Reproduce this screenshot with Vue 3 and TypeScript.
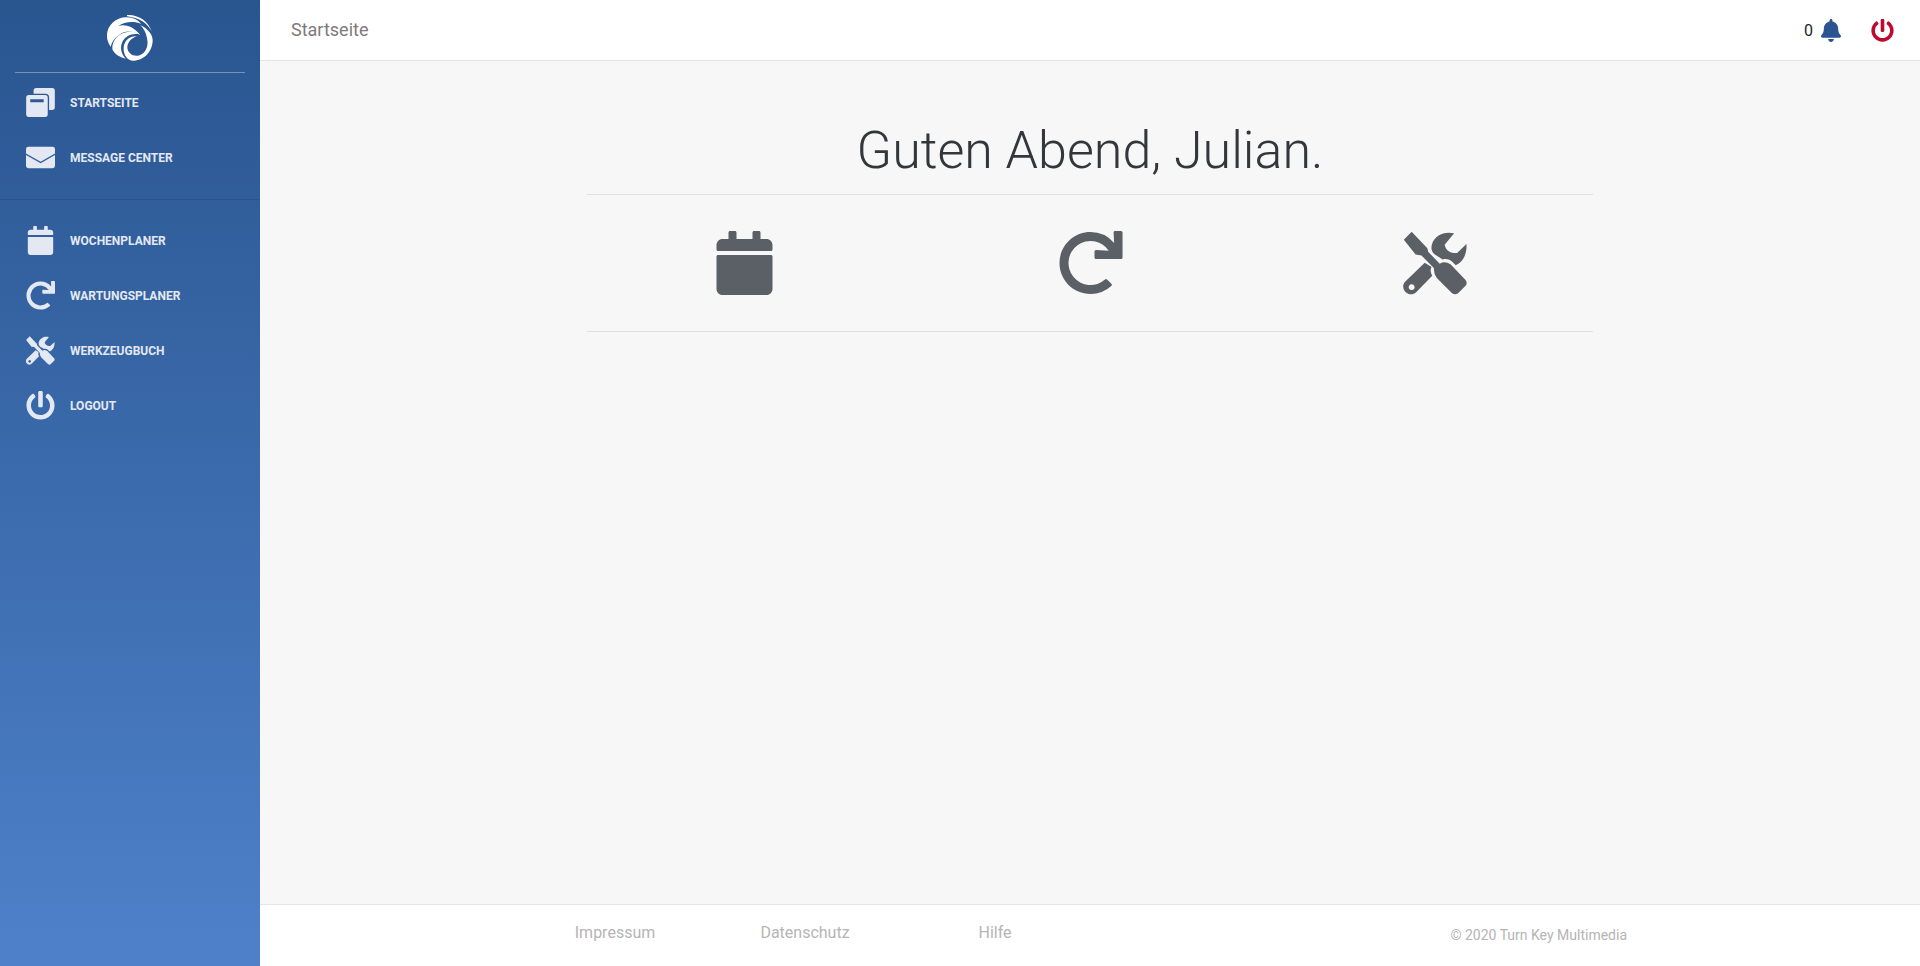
<script setup lang="ts">
interface IconDef {
  box: string
  d: string
}

const icons: Record<string, IconDef> = {
  copy: {
    box: '0 0 85 86',
    d: 'M30 0h47a8 8 0 0 1 8 8v49a8 8 0 0 1-8 8h-9V28a11 11 0 0 0-11-11H22V8a8 8 0 0 1 8-8zM8 21h48a8 8 0 0 1 8 8v49a8 8 0 0 1-8 8H8a8 8 0 0 1-8-8V29a8 8 0 0 1 8-8zM12 33v9h40v-9z',
  },
  mail: {
    box: '0 0 85 63',
    d: 'M7 0h71a7 7 0 0 1 7 7v13L43 44 0 20V7a7 7 0 0 1 7-7zM0 24l43 24 42-24v32a7 7 0 0 1-7 7H7a7 7 0 0 1-7-7z',
  },
  calendar: {
    box: '0 0 448 512',
    d: 'M12 192h424c6.6 0 12 5.4 12 12v260c0 26.5-21.5 48-48 48H48c-26.5 0-48-21.5-48-48V204c0-6.6 5.4-12 12-12zm436-44v-36c0-26.5-21.5-48-48-48h-48V12c0-6.6-5.4-12-12-12h-40c-6.6 0-12 5.4-12 12v52H160V12c0-6.6-5.4-12-12-12h-40c-6.6 0-12 5.4-12 12v52H48C21.5 64 0 85.5 0 112v36c0 6.6 5.4 12 12 12h424c6.6 0 12-5.4 12-12z',
  },
  redo: {
    box: '0 0 512 512',
    d: 'M500.33 0h-47.41a12 12 0 0 0-12 12.57l4 82.76A247.42 247.42 0 0 0 256 8C119.34 8 7.9 119.53 8 256.19 8.1 393.07 119.1 504 256 504a247.1 247.1 0 0 0 166.18-63.91 12 12 0 0 0 .48-17.43l-34-34a12 12 0 0 0-16.38-.55A176 176 0 1 1 402.1 157.8l-101.53-4.87a12 12 0 0 0-12.57 12v47.41a12 12 0 0 0 12 12h200.33a12 12 0 0 0 12-12V12a12 12 0 0 0-12-12z',
  },
  tools: {
    box: '130 60 196 196',
    d: 'M155 62L131 87L167 132L185 135L223 173Q222 190 232 204L278 250Q288 258 298 250L320 228Q327 219 320 210L274 162Q256 150 241 160L206 124L203 113zM285 67C255 60 225 73 217 101C213 116 218 126 226 132L250 147C268 142 278 152 290 165C305 158 325 140 323 100L294 127C278 130 260 122 256 102zM195 157L134 216C126 226 128 240 138 248C148 256 160 255 168 248L218 197C212 186 212 176 216 170zM155 223a9 9 0 1 0 .01 0z',
  },
  power: {
    box: '0 0 512 512',
    d: 'M400 54.1c63 45 104 118.6 104 201.9 0 136.8-110.8 247.7-247.5 248C120 504.3 8.2 393 8 256.4 7.9 173.1 48.9 99.3 111.8 54.2c11.7-8.3 28-4.8 35 7.7L162.6 90c5.9 10.5 3.1 23.8-6.6 31-41.5 30.8-68 79.6-68 134.9-.1 92.3 74.5 168.1 168 168.1 91.6 0 168.6-74.2 168-169.1-.3-51.8-24.7-101.8-68.1-134-9.7-7.2-12.4-20.5-6.5-30.9l15.8-28.1c7-12.4 23.2-16.1 34.8-7.8zM296 264V24c0-13.3-10.7-24-24-24h-32c-13.3 0-24 10.7-24 24v240c0 13.3 10.7 24 24 24h32c13.3 0 24-10.7 24-24z',
  },
  bell: {
    box: '0 0 448 512',
    d: 'M224 512c35.32 0 63.97-28.65 63.97-64H160.03c0 35.35 28.65 64 63.97 64zm215.39-149.71c-19.32-20.76-55.47-51.99-55.47-154.29 0-77.7-54.48-139.9-127.94-155.16V32c0-17.67-14.32-32-31.98-32s-31.98 14.33-31.98 32v20.84C118.56 68.1 64.08 130.3 64.08 208c0 102.3-36.15 133.53-55.47 154.29-6 6.45-8.66 14.16-8.61 21.71.11 16.4 12.98 32 32.1 32h383.8c19.12 0 32-15.6 32.1-32 .05-7.55-2.61-15.27-8.61-21.71z',
  },
}

const navGroups = [
  [
    { label: 'Startseite', icon: 'copy' },
    { label: 'Message Center', icon: 'mail' },
  ],
  [
    { label: 'Wochenplaner', icon: 'calendar' },
    { label: 'Wartungsplaner', icon: 'redo' },
    { label: 'Werkzeugbuch', icon: 'tools' },
    { label: 'Logout', icon: 'power' },
  ],
]

const tiles = ['calendar', 'redo', 'tools']
const footerLinks = ['Impressum', 'Datenschutz', 'Hilfe']
</script>

<template>
  <div class="shell">
    <aside class="sidebar">
      <div class="brand">
        <svg class="logo" viewBox="50 45 138 138" fill="#fff">
          <path d="M51 118C44 85 70 52 108 52C130 52 146 62 152 72C130 62 102 66 84 78C102 72 130 78 150 106C130 92 105 90 87 104C72 114 64 126 61 140C56 134 53 126 51 118Z" />
          <path d="M66 148C64 120 85 98 115 95C125 94 135 96 142 102C120 100 103 110 95 128C89 144 92 160 106 176C88 172 72 162 66 148Z" />
          <path d="M100 150C98 125 115 107 140 109C126 113 112 124 111 142C111 160 130 172 148 166C165 160 176 140 170 115C168 100 160 85 150 75C172 85 188 105 187 122C186 155 160 182 128 182C112 182 102 168 100 150Z" />
          <path d="M110 45C140 43 172 60 184 94C170 68 145 53 110 49Z" />
          <path d="M118 152C132 158 150 156 160 136" fill="none" stroke="#2b5791" stroke-width="3" />
        </svg>
      </div>
      <nav v-for="(group, i) in navGroups" :key="i" class="nav-group">
        <a v-for="item in group" :key="item.label" class="nav-item">
          <span class="nav-icon">
            <svg :viewBox="icons[item.icon].box" fill="currentColor" fill-rule="evenodd">
              <path :d="icons[item.icon].d" />
            </svg>
          </span>
          <span class="nav-label">{{ item.label }}</span>
        </a>
      </nav>
    </aside>

    <div class="page">
      <header class="topbar">
        <span class="crumb">Startseite</span>
        <div class="top-actions">
          <span class="count">0</span>
          <svg class="bell" :viewBox="icons.bell.box" fill="currentColor"><path :d="icons.bell.d" /></svg>
          <svg class="off" :viewBox="icons.power.box" fill="currentColor"><path :d="icons.power.d" /></svg>
        </div>
      </header>

      <main class="content">
        <div class="board">
          <h1 class="greeting">Guten Abend, Julian.</h1>
          <div class="tile-band">
            <div class="tiles">
              <div v-for="tile in tiles" :key="tile" class="tile">
                <svg :viewBox="icons[tile].box" fill="currentColor" fill-rule="evenodd">
                  <path :d="icons[tile].d" />
                </svg>
              </div>
            </div>
          </div>
        </div>
      </main>

      <footer class="footer">
        <div class="footer-links">
          <a v-for="link in footerLinks" :key="link">{{ link }}</a>
        </div>
        <span class="copyright">© 2020 Turn Key Multimedia</span>
      </footer>
    </div>
  </div>
</template>

<style>
html,
body {
  margin: 0;
  height: 100%;
}
</style>

<style scoped>
.shell {
  display: flex;
  height: 100vh;
  font-family: Roboto, "Liberation Sans", sans-serif;
  background: #f7f7f7;
}

.sidebar {
  flex: 0 0 260px;
  background: linear-gradient(180deg, #29558f 0%, #4e81ca 100%);
}

.brand {
  display: flex;
  justify-content: center;
  height: 57px;
  padding-top: 15px;
  margin: 0 15px;
  border-bottom: 1px solid rgba(255, 255, 255, 0.35);
}

.logo {
  width: 46px;
  height: 46px;
}

.nav-group {
  padding: 2px 0 14px;
  border-bottom: 1px solid rgba(0, 0, 0, 0.1);
}

.nav-group:last-child {
  padding-top: 13px;
  border-bottom: 0;
}

.nav-item {
  display: flex;
  align-items: center;
  gap: 15px;
  height: 55px;
  padding-left: 26px;
  color: #e4e8f2;
}

.nav-icon {
  display: flex;
  flex: 0 0 29px;
  justify-content: center;
}

.nav-icon svg {
  width: 29px;
  height: 29px;
}

.nav-label {
  font-size: 12px;
  font-weight: 700;
  text-transform: uppercase;
}

.page {
  display: flex;
  flex: 1;
  flex-direction: column;
  min-width: 0;
}

.topbar {
  display: flex;
  align-items: center;
  justify-content: space-between;
  box-sizing: border-box;
  height: 61px;
  padding: 0 26px 0 31px;
  background: #fff;
  border-bottom: 1px solid #e5e5e5;
}

.crumb {
  margin-bottom: 2px;
  font-size: 18px;
  color: #7f7a7a;
}

.top-actions {
  display: flex;
  align-items: center;
}

.count {
  margin-right: 8px;
  font-size: 16px;
  color: #212529;
}

.bell {
  width: 20px;
  height: 23px;
  margin-right: 30px;
  color: #2a5590;
}

.off {
  width: 23px;
  height: 23px;
  color: #bd0a2f;
}

.content {
  flex: 1;
  display: flex;
  justify-content: center;
}

.board {
  width: 1006px;
}

.greeting {
  margin: 0;
  padding-top: 60px;
  height: 73px;
  font-size: 52px;
  line-height: 60px;
  font-weight: 300;
  text-align: center;
  color: #33363a;
  border-bottom: 1px solid #e0e0e0;
}

.tile-band {
  height: 136px;
  border-bottom: 1px solid #e0e0e0;
}

.tiles {
  display: grid;
  grid-template-columns: repeat(3, 345.5px);
  justify-content: center;
  margin: 0 -15px;
}

.tile {
  display: flex;
  justify-content: center;
  padding-top: 36px;
  color: #5b5f66;
}

.tile svg {
  width: 65px;
  height: 64px;
}

.footer {
  display: flex;
  align-items: center;
  box-sizing: border-box;
  height: 62px;
  padding: 0 293px 0 260px;
  background: #fff;
  border-top: 1px solid #e5e5e5;
  color: #b5b5b5;
}

.footer-links {
  display: grid;
  grid-template-columns: repeat(3, 190px);
  flex: 1;
  text-align: center;
  font-size: 16px;
  margin-top: -6px;
}

.copyright {
  margin-bottom: 2px;
  font-size: 14px;
}
</style>
